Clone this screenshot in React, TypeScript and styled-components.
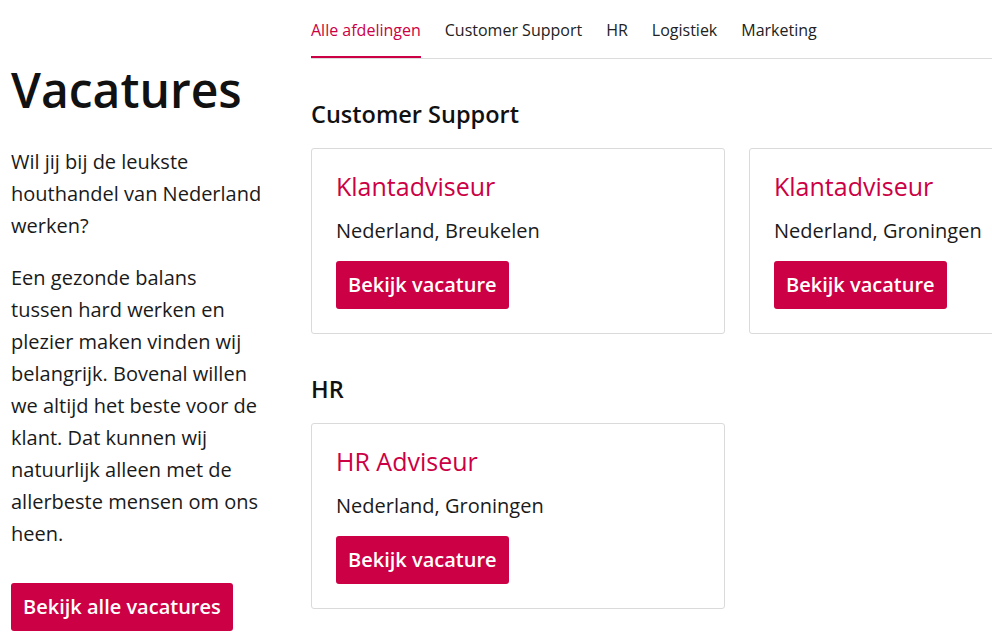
import React from 'react';
import styled, { createGlobalStyle } from 'styled-components';

const brand = '#cc0044';

const GlobalStyle = createGlobalStyle`
  html, body {
    margin: 0;
    padding: 0;
    background: #fff;
    overflow: hidden;
  }
  body {
    font-family: 'Open Sans', 'Noto Sans', sans-serif;
    color: #1a1a1a;
  }
`;

const Page = styled.div`
  display: flex;
  align-items: flex-start;
  padding-left: 11px;
  width: 100vw;
  box-sizing: border-box;
  overflow: hidden;
`;

const Sidebar = styled.aside`
  flex: 0 0 251px;
  margin-right: 49px;
`;

const Title = styled.h1`
  margin: 64px 0 30px 0;
  font-size: 48px;
  line-height: 52px;
  font-weight: 600;
  color: #111;
`;

const Intro = styled.p`
  margin: 0 0 20px 0;
  font-size: 20px;
  line-height: 32px;
`;

const Button = styled.a`
  display: inline-block;
  padding: 9px 12px;
  background: ${brand};
  color: #fff;
  font-size: 20px;
  line-height: 30px;
  font-weight: 600;
  border-radius: 3px;
  text-decoration: none;
`;

const AllButton = styled(Button)`
  margin-top: 13px;
`;

const Main = styled.main`
  flex: 1 0 auto;
  min-width: 0;
`;

const Tabs = styled.nav`
  display: flex;
  gap: 24px;
  padding-top: 18px;
  border-bottom: 1px solid #dcdcdc;
`;

const Tab = styled.a<{ $active?: boolean }>`
  padding-bottom: 14px;
  font-size: 16px;
  line-height: 24px;
  color: ${(p) => (p.$active ? brand : '#222')};
  border-bottom: 2px solid ${(p) => (p.$active ? brand : 'transparent')};
  text-decoration: none;
  white-space: nowrap;
`;

const Section = styled.section`
  margin-top: 41px;
`;

const SectionTitle = styled.h2`
  margin: 0 0 19px 0;
  font-size: 23.5px;
  line-height: 29px;
  font-weight: 600;
  color: #111;
`;

const CardRow = styled.div`
  display: flex;
  gap: 24px;
`;

const Card = styled.div`
  flex: 0 0 414px;
  box-sizing: border-box;
  padding: 22px 24px 24px 24px;
  border: 1px solid #dadada;
  border-radius: 3px;
`;

const JobTitle = styled.h3`
  margin: 0 0 15px 0;
  font-size: 25px;
  line-height: 30px;
  font-weight: 400;
  color: ${brand};
`;

const Location = styled.p`
  margin: 0 0 15px 0;
  font-size: 20px;
  line-height: 30px;
`;

const tabs = ['Alle afdelingen', 'Customer Support', 'HR', 'Logistiek', 'Marketing'];

const sections = [
  {
    name: 'Customer Support',
    jobs: [
      { title: 'Klantadviseur', location: 'Nederland, Breukelen' },
      { title: 'Klantadviseur', location: 'Nederland, Groningen' },
    ],
  },
  {
    name: 'HR',
    jobs: [{ title: 'HR Adviseur', location: 'Nederland, Groningen' }],
  },
];

export default function App() {
  return (
    <>
      <GlobalStyle />
      <Page>
        <Sidebar>
          <Title>Vacatures</Title>
          <Intro>Wil jij bij de leukste houthandel van Nederland werken?</Intro>
          <Intro>
            Een gezonde balans tussen hard werken en plezier maken vinden wij belangrijk. Bovenal
            willen we altijd het beste voor de klant. Dat kunnen wij natuurlijk alleen met de
            allerbeste mensen om ons heen.
          </Intro>
          <AllButton href="#">Bekijk alle vacatures</AllButton>
        </Sidebar>
        <Main>
          <Tabs>
            {tabs.map((t, i) => (
              <Tab key={t} href="#" $active={i === 0}>
                {t}
              </Tab>
            ))}
          </Tabs>
          {sections.map((s) => (
            <Section key={s.name}>
              <SectionTitle>{s.name}</SectionTitle>
              <CardRow>
                {s.jobs.map((job, i) => (
                  <Card key={i}>
                    <JobTitle>{job.title}</JobTitle>
                    <Location>{job.location}</Location>
                    <Button href="#">Bekijk vacature</Button>
                  </Card>
                ))}
              </CardRow>
            </Section>
          ))}
        </Main>
      </Page>
    </>
  );
}
